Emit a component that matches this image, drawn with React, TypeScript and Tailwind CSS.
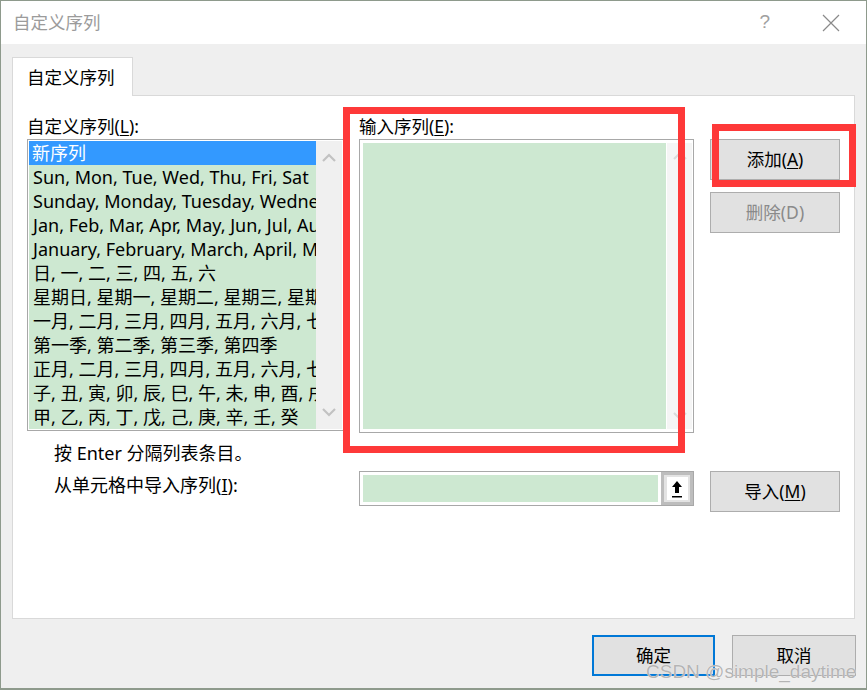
import React from 'react';

const FONT = { fontFamily: '"Noto Sans", "Noto Sans CJK SC", sans-serif' };

const listItems = [
  'Sun, Mon, Tue, Wed, Thu, Fri, Sat',
  'Sunday, Monday, Tuesday, Wednesday, Thursday, Friday, Saturday',
  'Jan, Feb, Mar, Apr, May, Jun, Jul, Aug, Sep, Oct, Nov, Dec',
  'January, February, March, April, May, June, July',
  '日, 一, 二, 三, 四, 五, 六',
  '星期日, 星期一, 星期二, 星期三, 星期四, 星期五, 星期六',
  '一月, 二月, 三月, 四月, 五月, 六月, 七月, 八月',
  '第一季, 第二季, 第三季, 第四季',
  '正月, 二月, 三月, 四月, 五月, 六月, 七月, 八月',
  '子, 丑, 寅, 卯, 辰, 巳, 午, 未, 申, 酉, 戌, 亥',
  '甲, 乙, 丙, 丁, 戊, 己, 庚, 辛, 壬, 癸',
];

const Chevron = ({ up }: { up?: boolean }) => (
  <svg width="14" height="9" viewBox="0 0 14 9" className="text-[#c2c2c2]">
    <path
      d={up ? 'M1 8 L7 2 L13 8' : 'M1 1 L7 7 L13 1'}
      fill="none"
      stroke="currentColor"
      strokeWidth="2.2"
    />
  </svg>
);

const ScrollBar = () => (
  <div className="w-[26px] h-full bg-[#f0f0f0] flex flex-col items-center justify-between py-[12px]">
    <Chevron up />
    <Chevron />
  </div>
);

const Btn = ({ children, disabled }: any) => (
  <div
    className={`w-[130px] h-[41px] flex items-center justify-center bg-[#e1e1e1] border border-[#adadad] text-[17.5px] ${
      disabled ? 'text-[#8a8a8a]' : 'text-black'
    }`}
  >
    {children}
  </div>
);

export default function App() {
  return (
    <div
      className="relative w-[867px] h-[690px] bg-[#efefef] border-l border-r border-t border-b-2 border-[#8e9a8c] flex flex-col overflow-hidden"
      style={FONT}
    >
      {/* title bar */}
      <div className="h-[43px] bg-white flex items-center pl-[12px] pr-[26px] shrink-0">
        <span className="text-[17.5px] text-[#9b9b9b] flex-1">自定义序列</span>
        <span className="text-[19px] text-[#a0a0a0] mr-[52px]" style={{ fontFamily: '"Liberation Sans", sans-serif' }}>?</span>
        <svg width="18" height="18" viewBox="0 0 18 18">
          <path d="M1 1 L17 17 M17 1 L1 17" stroke="#8a8a8a" strokeWidth="1.2" />
        </svg>
      </div>

      {/* tab */}
      <div className="pl-[11px] pt-[13px] shrink-0">
        <div className="w-[121px] h-[39px] bg-white border border-b-0 border-[#d9d9d9] flex items-center pl-[14px] text-[17.5px] text-black -mb-px relative z-10">
          自定义序列
        </div>
      </div>

      {/* panel */}
      <div className="ml-[11px] w-[843px] h-[524px] bg-white border border-[#d9d9d9] pl-[14px] pt-[17px] shrink-0">
        <div className="flex">
          {/* left column */}
          <div className="w-[317px]">
            <div className="h-[26px] text-[17.5px] leading-[26px] text-black">
              自定义序列(<span className="underline underline-offset-2">L</span>):
            </div>
            <div className="h-[292px] border border-[#a8a8a8] flex p-px">
              <div className="flex-1 min-w-0 bg-[#cde8d1] overflow-hidden text-[18px] text-black">
                <div className="h-[24px] leading-[24px] bg-[#3399ff] text-white pl-[3px]">新序列</div>
                {listItems.map((t) => (
                  <div key={t} className="h-[24px] leading-[24px] pl-[4px] whitespace-nowrap">
                    {t}
                  </div>
                ))}
              </div>
              <ScrollBar />
            </div>
          </div>

          {/* middle column */}
          <div className="w-[335px] ml-[15px]">
            <div className="h-[26px] text-[17.5px] leading-[26px] text-black">
              输入序列(<span className="underline underline-offset-2">E</span>):
            </div>
            <div className="h-[294px] border border-[#a8a8a8] flex p-[3px] pr-px">
              <div className="flex-1 bg-[#cde8d1]" />
              <div className="w-[25px] ml-px h-full bg-[#f0f0f0] flex flex-col items-center justify-between py-[8px] opacity-60">
                <Chevron up />
                <Chevron />
              </div>
            </div>
          </div>

          {/* right column */}
          <div className="ml-[16px] pt-[26px] flex flex-col gap-[12px]">
            <Btn>
              添加(<span className="underline underline-offset-2">A</span>)
            </Btn>
            <Btn disabled>删除(D)</Btn>
          </div>
        </div>

        <div className="mt-[8px] pl-[27px] h-[24px] leading-[24px] text-[18px] text-black">
          按 Enter 分隔列表条目。
        </div>

        <div className="flex mt-[6px]">
          <div className="w-[332px] pl-[27px] pt-[2px] text-[18px] leading-[24px] text-black">
            从单元格中导入序列(<span className="underline underline-offset-2">I</span>):
          </div>
          <div className="w-[335px] h-[35px] border border-[#a8a8a8] flex items-stretch">
            <div className="flex-1 m-[3px] bg-[#cde8d1]" />
            <div className="w-[32px] border-[3px] border-[#bdbdbd] bg-[#e3e3e3] flex items-center justify-center">
              <div className="w-[21px] h-[23px] bg-white flex items-center justify-center">
                <svg width="14" height="18" viewBox="0 0 14 18">
                  <path d="M7 1 L12 7 L9 7 L9 13 L5 13 L5 7 L2 7 Z" fill="#000" />
                  <rect x="2" y="16" width="10" height="1.5" fill="#000" />
                </svg>
              </div>
            </div>
          </div>
          <div className="ml-[16px]">
            <Btn>
              导入(<span className="underline underline-offset-2">M</span>)
            </Btn>
          </div>
        </div>
      </div>

      {/* bottom buttons */}
      <div className="flex justify-end gap-[17px] pr-[10px] mt-[16px]">
        <div className="w-[123px] h-[41px] flex items-center justify-center bg-[#e1e1e1] border-2 border-[#0078d7] text-[17.5px] text-black">
          确定
        </div>
        <div className="w-[124px] h-[41px] flex items-center justify-center bg-[#e1e1e1] border border-[#adadad] text-[17.5px] text-black">
          取消
        </div>
      </div>

      {/* annotation overlays */}
      <div className="absolute left-[342px] top-[106px] w-[342px] h-[346px] border-[7px] border-[#fe3939] pointer-events-none" />
      <div className="absolute left-[711px] top-[123px] w-[144px] h-[63px] border-[7px] border-[#fe3939] pointer-events-none" />

      {/* watermark */}
      <div
        className="absolute left-[645px] top-[657px] text-[19px] text-[#b4b4b4] whitespace-nowrap pointer-events-none"
        style={{ fontFamily: '"Liberation Sans", sans-serif', textShadow: '0 0 1px #fff' }}
      >
        CSDN @simple_daytime
      </div>
    </div>
  );
}
